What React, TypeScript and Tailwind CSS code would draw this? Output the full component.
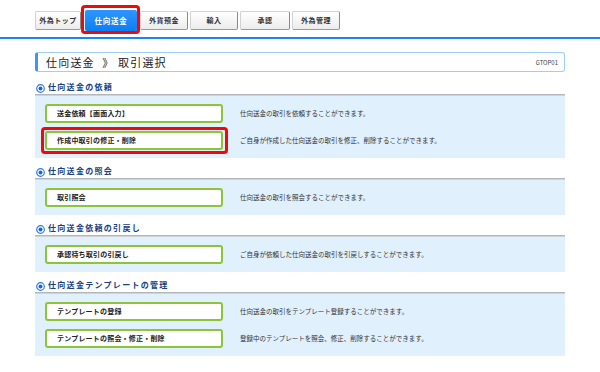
import React from "react";

const font = { fontFamily: '"Noto Sans CJK JP", "Noto Sans", sans-serif' };

function Radio() {
  return (
    <svg width="9" height="9" viewBox="0 0 9 9" className="shrink-0">
      <circle cx="4.5" cy="4.5" r="3.8" fill="#fff" stroke="#2a7de1" strokeWidth="1.2" />
      <circle cx="4.5" cy="4.5" r="2" fill="#1a66cc" />
    </svg>
  );
}

type Row = { label: string; desc: string; marked?: boolean };

function Section({ title, rows }: { title: string; rows: Row[] }) {
  return (
    <div>
      <div className="h-[20px] flex items-end pb-[1px] pl-[1px] gap-[3px]">
        <Radio />
        <span className="text-[8px] leading-[12px] font-bold tracking-[1.3px] text-[#17407e]">{title}</span>
      </div>
      <div className="h-[2px] bg-[#b3b6ba] border-b border-[#d0d3d6]" />
      <div className="bg-[#e1f0fd] pt-[8px] pl-[10px]">
        {rows.map((r) => (
          <div key={r.label} className="h-[27px] flex items-start">
            <div className="relative">
              <div className="w-[178px] h-[19px] rounded-[3px] border-2 border-[#8cc53a] bg-white flex items-center pl-[10px] text-[7px] font-bold text-[#222] tracking-[0.2px]">
                {r.label}
              </div>
              {r.marked && (
                <div className="absolute -left-[4px] -top-[4px] -right-[5px] -bottom-[4px] border-[3px] border-[#ee0a0a] rounded-[4px]" />
              )}
            </div>
            <div className="ml-[17px] h-[19px] flex items-center text-[6.5px] text-[#333]">{r.desc}</div>
          </div>
        ))}
      </div>
    </div>
  );
}

const tabs = [
  { label: "外為トップ", cls: "w-[46px]" },
  { label: "仕向送金", cls: "ml-[4px] w-[52px]", active: true },
  { label: "外貨預金", cls: "ml-[3px] w-[48px]" },
  { label: "輸入", cls: "ml-[2px] w-[48px]" },
  { label: "承認", cls: "ml-[2px] w-[50px]" },
  { label: "外為管理", cls: "ml-[2px] w-[48px]" },
];

export default function App() {
  return (
    <div className="w-[600px] h-[372px] bg-white overflow-hidden" style={font}>
      <div className="pt-[11px] h-[37px] pl-[35px] flex items-start">
        {tabs.map((t) =>
          t.active ? (
            <div key={t.label} className={`relative ${t.cls}`}>
              <div className="-mt-[1px] h-[21px] bg-gradient-to-b from-[#2d96ff] to-[#0a7ef0] rounded-[2px] flex items-center justify-center text-[7.5px] font-bold text-white tracking-[0.8px] shadow-[1px_1px_0_#0b5fb8]">
                {t.label}
              </div>
              <div className="absolute -left-[4px] -top-[6px] -right-[3px] -bottom-[3px] border-[3px] border-[#ee0a0a] rounded-[4px]" />
            </div>
          ) : (
            <div
              key={t.label}
              className={`${t.cls} h-[19px] bg-gradient-to-b from-white to-[#ececec] border border-[#d2d2d2] border-r-[#8a8a8a] border-b-[#9a9a9a] rounded-[2px] flex items-center justify-center text-[7px] font-bold text-[#333] tracking-[0.5px]`}
            >
              {t.label}
            </div>
          )
        )}
      </div>
      <div className="h-[2px] bg-[#1a86f5]" />
      <div className="mx-[35px] mt-[13px]">
        <div className="h-[20px] border border-[#9dcdf8] border-l-[3px] border-l-[#3b97f0] rounded-[3px] flex items-center justify-between pl-[8px] pr-[6px]">
          <span className="text-[11px] text-[#222] tracking-[1.2px]">仕向送金 &nbsp;》 取引選択</span>
          <span className="text-[6px] text-[#444]">GTOP01</span>
        </div>
        <div className="mt-[2px]">
          <Section
            title="仕向送金の依頼"
            rows={[
              { label: "送金依頼【画面入力】", desc: "仕向送金の取引を依頼することができます。" },
              { label: "作成中取引の修正・削除", desc: "ご自身が作成した仕向送金の取引を修正、削除することができます。", marked: true },
            ]}
          />
          <Section title="仕向送金の照会" rows={[{ label: "取引照会", desc: "仕向送金の取引を照会することができます。" }]} />
          <Section
            title="仕向送金依頼の引戻し"
            rows={[{ label: "承認待ち取引の引戻し", desc: "ご自身が依頼した仕向送金の取引を引戻しすることができます。" }]}
          />
          <Section
            title="仕向送金テンプレートの管理"
            rows={[
              { label: "テンプレートの登録", desc: "仕向送金の取引をテンプレート登録することができます。" },
              { label: "テンプレートの照会・修正・削除", desc: "登録中のテンプレートを照会、修正、削除することができます。" },
            ]}
          />
        </div>
      </div>
    </div>
  );
}
